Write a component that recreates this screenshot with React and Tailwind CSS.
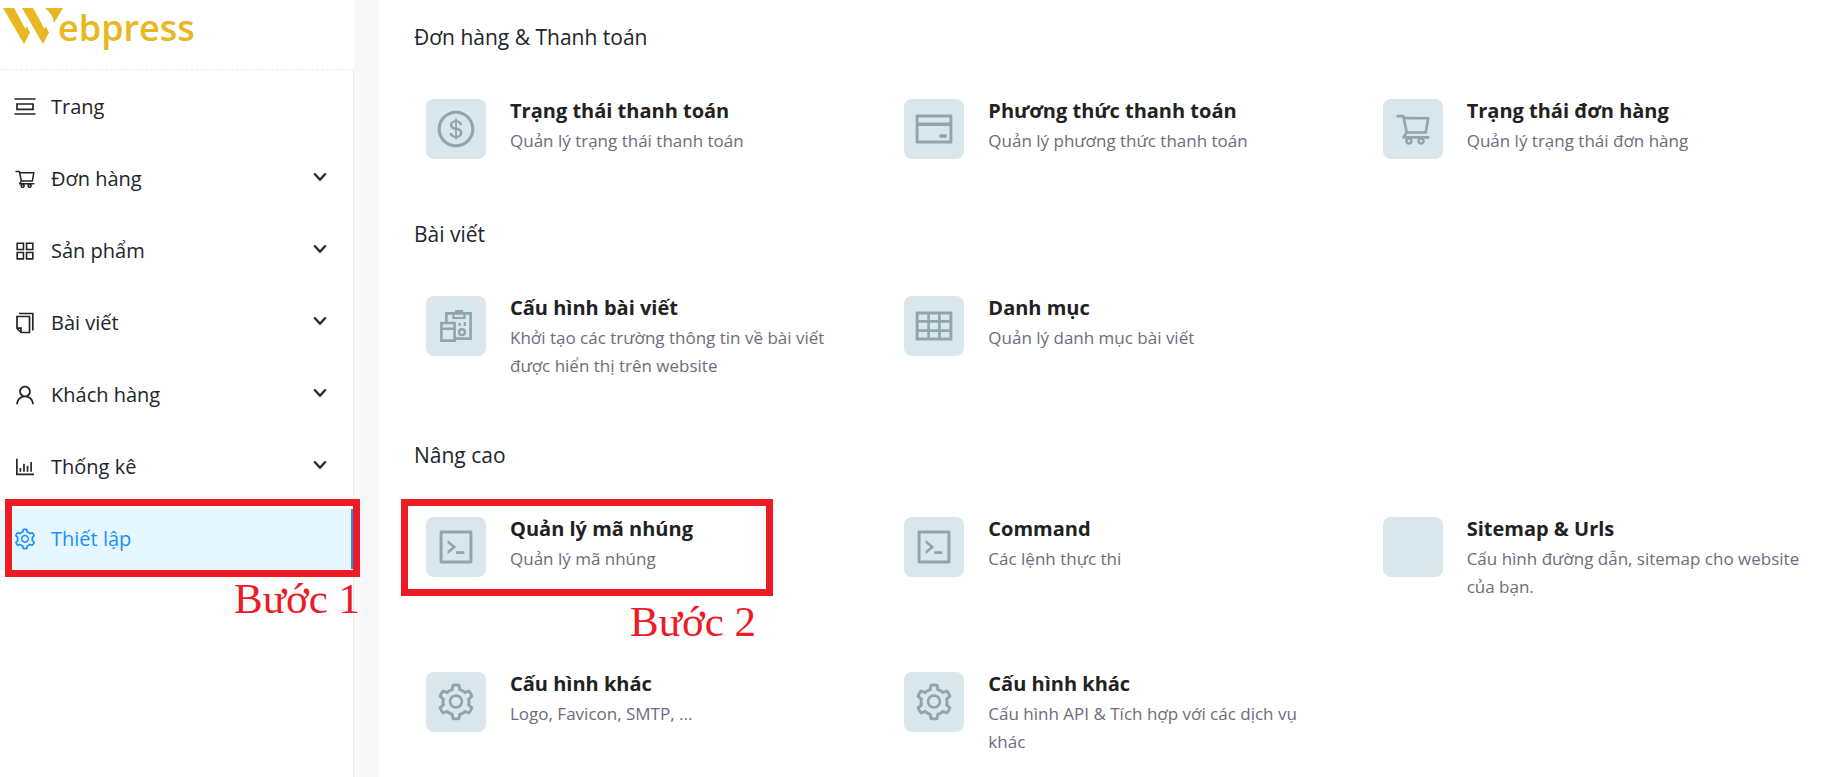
import React from "react";
import {
  AiOutlineAppstore,
  AiOutlineBarChart,
  AiOutlineCode,
  AiOutlineCreditCard,
  AiOutlineDollar,
  AiOutlineSetting,
  AiOutlineShoppingCart,
  AiOutlineTable,
  AiOutlineUser,
} from "react-icons/ai";

const PagesIcon = () => (
  <svg width="22" height="22" viewBox="0 0 22 22" fill="none" stroke="currentColor" strokeWidth="1.7">
    <path d="M0.5 3H21.5M0.5 18H21.5" />
    <path d="M3 8H19V13.4H3Z" />
  </svg>
);

const PostsIcon = () => (
  <svg width="22" height="22" viewBox="0 0 22 22" fill="none" stroke="currentColor" strokeWidth="1.7">
    <path d="M5 1.5H18.8V18.5" />
    <path d="M3 4.5H15.5V20.5H7L3 16.5Z" />
    <path d="M3 16.2H7V20.5" />
  </svg>
);

const ClipboardIcon = () => (
  <svg width="36" height="36" viewBox="0 0 36 36" fill="none" stroke="currentColor" strokeWidth="2.6">
    <path d="M8.4 14V5.4H32.6V30.6H17" />
    <path d="M15.5 5V10H26.5V5H24V3H18V5Z" strokeWidth="2.2" />
    <path d="M3.4 15H16.6V32.6H3.4ZM3.4 20.8H16.6" />
    <circle cx="24" cy="24.2" r="2.9" strokeWidth="2.4" />
    <path d="M21.6 15V18M26.8 14V18" strokeWidth="2.2" />
  </svg>
);

const ChevronIcon = () => (
  <svg width="14" height="10" viewBox="0 0 14 10" fill="none" stroke="currentColor" strokeWidth="2.2" className="mb-1">
    <path d="M1.2 1.5L7 7.6L12.8 1.5" />
  </svg>
);

const Logo = () => (
  <a href="#" aria-label="Webpress" className="flex h-[49px] items-start text-[#e8b722]">
    <svg width="64" height="49" viewBox="0 0 64 49" fill="currentColor" className="shrink-0">
      <path d="M3 8H14L25.5 29L26.5 26L30 32.5L24 44Z" />
      <path d="M22 8H33L44.5 29L45.5 26L49 32.5L43 44Z" />
      <path d="M45 8H63L54 23Q53 14 45 8Z" />
    </svg>
    <span className="-ml-[6px] text-[36px] leading-[56px] font-semibold">ebpress</span>
  </a>
);

const menu = [
  { label: "Trang", icon: <PagesIcon /> },
  { label: "Đơn hàng", icon: <AiOutlineShoppingCart size={22} />, sub: true },
  { label: "Sản phẩm", icon: <AiOutlineAppstore size={24} />, sub: true },
  { label: "Bài viết", icon: <PostsIcon />, sub: true },
  { label: "Khách hàng", icon: <AiOutlineUser size={24} />, sub: true },
  { label: "Thống kê", icon: <AiOutlineBarChart size={24} />, sub: true },
];

const sections = [
  {
    title: "Đơn hàng & Thanh toán",
    items: [
      { title: "Trạng thái thanh toán", desc: "Quản lý trạng thái thanh toán", icon: <AiOutlineDollar size={42} /> },
      { title: "Phương thức thanh toán", desc: "Quản lý phương thức thanh toán", icon: <AiOutlineCreditCard size={42} /> },
      { title: "Trạng thái đơn hàng", desc: "Quản lý trạng thái đơn hàng", icon: <AiOutlineShoppingCart size={38} /> },
    ],
  },
  {
    title: "Bài viết",
    items: [
      { title: "Cấu hình bài viết", desc: "Khởi tạo các trường thông tin về bài viết được hiển thị trên website", icon: <ClipboardIcon /> },
      { title: "Danh mục", desc: "Quản lý danh mục bài viết", icon: <AiOutlineTable size={42} /> },
    ],
  },
  {
    title: "Nâng cao",
    items: [
      { title: "Quản lý mã nhúng", desc: "Quản lý mã nhúng", icon: <AiOutlineCode size={42} />, step: "Bước 2" },
      { title: "Command", desc: "Các lệnh thực thi", icon: <AiOutlineCode size={42} /> },
      { title: "Sitemap & Urls", desc: "Cấu hình đường dẫn, sitemap cho website của bạn." },
      { title: "Cấu hình khác", desc: "Logo, Favicon, SMTP, ...", icon: <AiOutlineSetting size={42} /> },
      { title: "Cấu hình khác", desc: "Cấu hình API & Tích hợp với các dịch vụ khác", icon: <AiOutlineSetting size={42} /> },
    ],
  },
];

const MenuItem = ({ label, icon, sub }) => {
  const content = (
    <>
      <span className="flex w-6 justify-center">{icon}</span>
      <span className="flex-1 text-left">{label}</span>
      {sub && <ChevronIcon />}
    </>
  );
  const style = "flex h-[60px] w-full items-center gap-[14px] pr-[26px] pl-[13px]";

  return (
    <li>
      {sub ? (
        <button type="button" className={style}>{content}</button>
      ) : (
        <a href="#" className={style}>{content}</a>
      )}
    </li>
  );
};

const SettingCard = ({ title, desc, icon, step }) => (
  <a href="#" className="relative flex items-start gap-6">
    <span className="flex size-[60px] shrink-0 items-center justify-center rounded-lg bg-[#d9e6ec] text-[#90a4ae]">
      {icon}
    </span>
    <span className="flex flex-col gap-1">
      <strong className="text-[20px] leading-[24px] font-bold text-[#212121]">{title}</strong>
      <span className="text-[17px] leading-[28px] text-[#6c6c7c]">{desc}</span>
    </span>

    {/* Step marker */}
    {step && (
      <>
        <span className="absolute -top-[18px] -left-[25px] h-[97px] w-[372px] border-7 border-[#ed1c24]" />
        <span className="absolute top-[80px] left-[204px] font-['Liberation_Serif',serif] text-[43px] leading-[50px] whitespace-nowrap text-[#ed1c24]">
          {step}
        </span>
      </>
    )}
  </a>
);

const App = () => {
  return (
    <div className="flex min-h-screen w-full bg-white font-['Open_Sans','Noto_Sans',sans-serif] text-[#212529]">
      {/* Sidebar */}
      <aside className="flex w-[354px] shrink-0 flex-col">
        <div className="h-[70px] border-b border-dashed border-[#ebebeb]">
          <Logo />
        </div>

        <nav className="flex-1 border-r border-[#ebebeb] pt-[7px] text-[20px]">
          <ul className="flex flex-col gap-3">
            {menu.map((item) => (
              <MenuItem key={item.label} {...item} />
            ))}
            <li className="relative">
              <a
                href="#"
                aria-current="page"
                className="flex h-[60px] items-center gap-[14px] border-r-2 border-[#1890ff] bg-[#e6f7ff] pl-[13px] text-[#1890ff]"
              >
                <AiOutlineSetting size={24} />
                Thiết lập
              </a>
              <span className="pointer-events-none absolute -top-[10px] left-[5px] h-[78px] w-[355px] border-7 border-[#ed1c24]" />
              <span className="absolute top-[65px] left-[234px] z-10 font-['Liberation_Serif',serif] text-[43px] leading-[50px] whitespace-nowrap text-[#ed1c24]">
                Bước 1
              </span>
            </li>
          </ul>
        </nav>
      </aside>

      {/* Settings */}
      <div className="flex-1 bg-[#f8f8f8] pl-[25px]">
        <main className="flex h-full flex-col gap-[59px] bg-white pt-[21px] pr-[14px] pl-[35px]">
          {sections.map((section) => (
            <section key={section.title}>
              <h2 className="mb-[46px] text-[21px] leading-[32px] font-medium">{section.title}</h2>
              <div className="grid grid-cols-3 gap-x-[54px] gap-y-[71px] pl-3">
                {section.items.map((item, index) => (
                  <SettingCard key={index} {...item} />
                ))}
              </div>
            </section>
          ))}
        </main>
      </div>
    </div>
  );
};

export default App;
